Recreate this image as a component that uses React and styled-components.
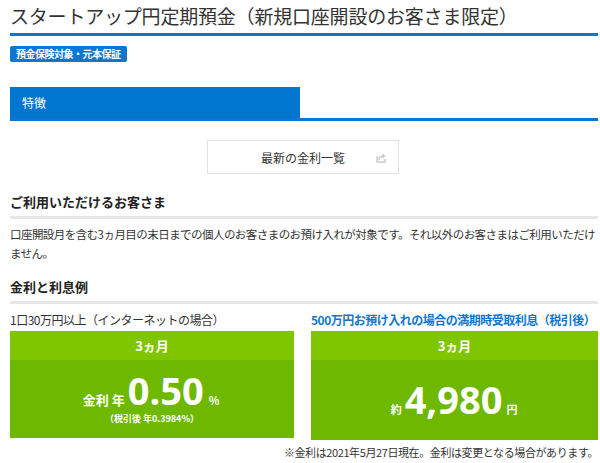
import React from "react";
import styled, { createGlobalStyle } from "styled-components";

const G = createGlobalStyle`
  body { margin: 0; background: #fff; font-family: "Noto Sans CJK JP", "Noto Sans", sans-serif; color: #333; }
`;
const Page = styled.div` padding: 0 2px 0 10px; width: 588px; `;
const Title = styled.h1`
  margin: 0; padding-top: 3px; height: 30px; font-size: 19px; font-weight: 400; line-height: 26px; color: #333;
  border-bottom: 3px solid #0f76d0; letter-spacing: -0.2px;
`;
const Badge = styled.span`
  display: inline-block; margin-top: 10px; background: #0f76d0; color: #fff; font-size: 10px; font-weight: 700;
  padding: 0 6px; height: 16px; line-height: 16px; border-radius: 2px; letter-spacing: -0.5px;
`;
const TabBar = styled.div` margin-top: 24px; border-bottom: 3px solid #0f76d0; `;
const Tab = styled.div`
  width: 290px; height: 31px; background: #0076d1; color: #fff; font-size: 12px; line-height: 31px; padding-left: 12px; box-sizing: border-box;
`;
const BtnWrap = styled.div` display: flex; justify-content: center; margin-top: 19px; padding-right: 2px; `;
const Btn = styled.div`
  width: 192px; height: 34px; border: 1px solid #e3e3e3; box-sizing: border-box; display: flex; align-items: center; justify-content: center;
  position: relative; font-size: 12px; color: #333;
  svg { position: absolute; right: 12px; top: 12px; }
`;
const H2 = styled.h2`
  margin: ${p => p.$mt}px 0 0; font-size: 13px; font-weight: 700; color: #222; line-height: 18px; padding-bottom: 5px;
  border-bottom: 3px solid #e6e6e6;
`;
const P = styled.p` margin: 6px 0 0; font-size: 11.5px; line-height: 19px; color: #333; letter-spacing: -0.55px; `;
const Cols = styled.div` display: grid; grid-template-columns: 284px 287px; column-gap: 17px; margin-top: 8px; `;
const Col = styled.div``;
const Label = styled.div` font-size: 12px; line-height: 16px; color: ${p => p.$blue ? "#0f76d0" : "#333"}; font-weight: ${p => p.$blue ? 700 : 400}; letter-spacing: -0.5px; margin-bottom: 3px; white-space: nowrap; `;
const Box = styled.div` background: #6eb900; color: #fff; height: ${p => p.$h}px; display: flex; flex-direction: column; `;
const BoxHead = styled.div` background: #7fc600; height: 29px; line-height: 29px; text-align: center; font-size: 13px; font-weight: 700; `;
const BoxBody = styled.div` flex: 1; display: flex; flex-direction: column; align-items: center; justify-content: center; padding-bottom: 2px; `;
const Rate = styled.div` display: flex; align-items: baseline; font-weight: 700; `;
const Small = styled.span` font-size: ${p => p.$s}px; margin: 0 ${p => p.$m || 3}px; `;
const Big = styled.span` font-family: "Open Sans", "DejaVu Sans", sans-serif; font-size: 38px; line-height: 38px; font-weight: 700; `;
const Sub = styled.div` font-size: 9px; line-height: 12px; font-weight: 700; margin-top: 4px; `;
const Note = styled.div` text-align: right; font-size: 11px; line-height: 15px; color: #333; margin-top: 5px; letter-spacing: -0.4px; `;

export default function App() {
  return (
    <Page>
      <G />
      <Title>スタートアップ円定期預金（新規口座開設のお客さま限定）</Title>
      <Badge>預金保険対象・元本保証</Badge>
      <TabBar><Tab>特徴</Tab></TabBar>
      <BtnWrap>
        <Btn>最新の金利一覧
          <svg width="10" height="10" viewBox="0 0 10 10" fill="none" stroke="#c8c8c8" strokeWidth="1.4">
            <path d="M1 3v6h8V6" /><path d="M3 7c0-3 2-4 5-4" /><path d="M6.5 1.2L8.5 3 6.5 4.8" />
          </svg>
        </Btn>
      </BtnWrap>
      <H2 $mt={19}>ご利用いただけるお客さま</H2>
      <P>口座開設月を含む3ヵ月目の末日までの個人のお客さまのお預け入れが対象です。それ以外のお客さまはご利用いただけません。</P>
      <H2 $mt={15}>金利と利息例</H2>
      <Cols>
        <Col>
          <Label>1口30万円以上（インターネットの場合）</Label>
          <Box $h={107}>
            <BoxHead>3ヵ月</BoxHead>
            <BoxBody>
              <Rate><Small $s={13}>金利 年</Small><Big>0.50</Big><Small $s={11} $m={5}>%</Small></Rate>
              <Sub>（税引後 年0.3984%）</Sub>
            </BoxBody>
          </Box>
        </Col>
        <Col>
          <Label $blue>500万円お預け入れの場合の満期時受取利息（税引後）</Label>
          <Box $h={109}>
            <BoxHead>3ヵ月</BoxHead>
            <BoxBody>
              <Rate><Small $s={11}>約</Small><Big>4,980</Big><Small $s={11} $m={4}>円</Small></Rate>
            </BoxBody>
          </Box>
        </Col>
      </Cols>
      <Note>※金利は2021年5月27日現在。金利は変更となる場合があります。</Note>
    </Page>
  );
}
